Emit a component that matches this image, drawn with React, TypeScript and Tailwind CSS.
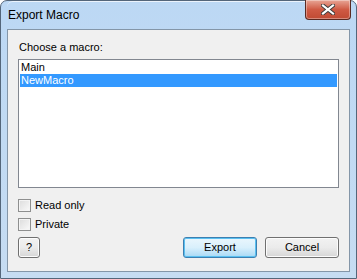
export default function App() {
  const font = { fontFamily: '"Liberation Sans", Arial, sans-serif' }
  return (
    <div
      className="w-[357px] h-[279px] flex flex-col rounded-t-[7px] border border-[#54667a] bg-gradient-to-b from-[#bcd8f4] to-[#c6dcf2] px-[6px] pb-[6px] text-black"
      style={font}
    >
      {/* Title bar */}
      <div className="flex h-[28px] items-start border-t border-white/70 rounded-t-[6px]">
        <div className="pl-[1px] pt-[6px] text-[12px] leading-[14px]">Export Macro</div>
        <div className="flex-1" />
        <button className="-mt-[2px] mr-[-1px] flex h-[20px] w-[46px] items-center justify-center rounded-b-[4px] border border-t-0 border-[#5a2a22] bg-gradient-to-b from-[#e7a596] via-[#cf5a44] to-[#c04a33] shadow-[inset_0_0_0_1px_rgba(255,255,255,0.35)]">
          <svg width="14" height="11" viewBox="0 0 14 11">
            <path d="M2 1.5 L12 9.5 M12 1.5 L2 9.5" stroke="#3a3a3a" strokeWidth="4" strokeLinecap="square" />
            <path d="M2 1.5 L12 9.5 M12 1.5 L2 9.5" stroke="#ffffff" strokeWidth="2.2" strokeLinecap="square" />
          </svg>
        </button>
      </div>

      {/* Client area */}
      <div className="flex flex-1 flex-col border border-[#8496a8] bg-[#f0f0f0] pl-[10px] pr-[10px] pt-[11px] pb-[13px] text-[11px] leading-[13px]">
        <div className="ml-px">Choose a macro:</div>
        <div className="mt-[5px] h-[129px] border border-[#828790] bg-white p-px">
          <div className="h-[13px] pl-[1px]">Main</div>
          <div className="h-[13px] bg-[#3399ff] pl-[1px] text-white">NewMacro</div>
        </div>

        <label className="mt-[11px] flex items-center gap-[4px]">
          <span className="h-[13px] w-[13px] border border-[#8e8f8f] bg-gradient-to-br from-[#dcdcdc] to-[#fafafa] shadow-[inset_0_0_0_1px_#f4f4f4]" />
          <span>Read only</span>
        </label>
        <label className="mt-[6px] flex items-center gap-[4px]">
          <span className="h-[13px] w-[13px] border border-[#8e8f8f] bg-gradient-to-br from-[#dcdcdc] to-[#fafafa] shadow-[inset_0_0_0_1px_#f4f4f4]" />
          <span>Private</span>
        </label>

        <div className="mt-auto flex items-center">
          <button className="flex h-[21px] w-[22px] items-center justify-center rounded-[3px] border border-[#707070] bg-gradient-to-b from-[#f2f2f2] via-[#ebebeb] to-[#d6d6d6] text-[11px] shadow-[inset_0_0_0_1px_#fcfcfc]">
            ?
          </button>
          <div className="flex-1" />
          <button className="flex h-[21px] w-[74px] items-center justify-center rounded-[3px] border border-[#3c7fb1] bg-gradient-to-b from-[#eaf6fd] via-[#d9f0fc] to-[#a7d9f5] shadow-[inset_0_0_0_1px_#5ac0f0]">
            Export
          </button>
          <button className="ml-[8px] flex h-[21px] w-[74px] items-center justify-center rounded-[3px] border border-[#707070] bg-gradient-to-b from-[#f2f2f2] via-[#ebebeb] to-[#d6d6d6] shadow-[inset_0_0_0_1px_#fcfcfc]">
            Cancel
          </button>
        </div>
      </div>
    </div>
  )
}
